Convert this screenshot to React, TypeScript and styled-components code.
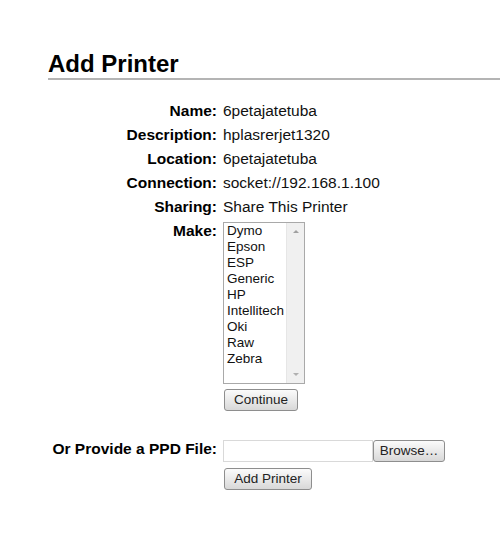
import React from "react";
import styled, { createGlobalStyle } from "styled-components";

const GlobalStyle = createGlobalStyle`
    body {
        margin: 0;
        background: #fff;
        font-family: "Liberation Sans", Arial, sans-serif;
        color: #000;
    }
`;

const Page = styled.div`
    padding: 50px 0 40px 48px;
`;

const Title = styled.h2`
    margin: 0 0 19px 0;
    font-size: 24px;
    line-height: 28px;
    font-weight: bold;
    color: #000;
    border-bottom: 2px solid #b4b4b4;
`;

const Form = styled.div`
    display: grid;
    grid-template-columns: 170px 1fr;
    column-gap: 5px;
    align-items: start;
`;

const Label = styled.div<{ lh?: number }>`
    text-align: right;
    padding-right: 1px;
    font-size: 15.5px;
    font-weight: bold;
    line-height: ${p => p.lh ?? 24}px;
    white-space: nowrap;
`;

const Value = styled.div`
    font-size: 15.5px;
    line-height: 24px;
    color: #111;
`;

const Cell = styled.div<{ top?: number }>`
    display: flex;
    flex-direction: column;
    align-items: flex-start;
    padding-top: ${p => p.top ?? 0}px;
`;

const ListBox = styled.div`
    display: flex;
    width: 80px;
    height: 160px;
    border: 1px solid #a9a9a9;
    background: #fff;
`;

const Options = styled.div`
    flex: 1;
    display: flex;
    flex-direction: column;
`;

const Option = styled.div`
    font-size: 13.5px;
    line-height: 16px;
    padding-left: 3px;
    color: #111;
`;

const ScrollBar = styled.div`
    width: 17px;
    display: flex;
    flex-direction: column;
    justify-content: space-between;
    align-items: center;
    background: #f0f0f0;
    border-left: 1px solid #e6e6e6;
`;

const Arrow = styled.div<{ down?: boolean }>`
    width: 17px;
    height: 17px;
    display: flex;
    align-items: center;
    justify-content: center;

    &::before {
        content: "";
        width: 0;
        height: 0;
        border-left: 3.5px solid transparent;
        border-right: 3.5px solid transparent;
        ${p => p.down
            ? "border-top: 3px solid #b0b0b0;"
            : "border-bottom: 3px solid #a0a0a0;"}
    }
`;

const Button = styled.button<{ w: number; mt?: number; ml?: number }>`
    width: ${p => p.w}px;
    height: 22px;
    margin: ${p => p.mt ?? 0}px 0 0 ${p => p.ml ?? 1}px;
    padding: 0;
    border: 1px solid #8e8e8e;
    border-radius: 3px;
    background: linear-gradient(#fbfbfb, #e8e8e8 55%, #d8d8d8);
    font-family: "Liberation Sans", Arial, sans-serif;
    font-size: 13.5px;
    line-height: 20px;
    color: #222;
`;

const FileRow = styled.div`
    display: flex;
    align-items: flex-start;
`;

const FileInput = styled.div`
    width: 148px;
    height: 20px;
    border: 1px solid #d9d9d9;
    background: #fff;
`;

const Spacer = styled.div`
    grid-column: 1 / span 2;
    height: 29px;
`;

const makes = ["Dymo", "Epson", "ESP", "Generic", "HP", "Intellitech", "Oki", "Raw", "Zebra"];

const info: [string, string][] = [
    ["Name:", "6petajatetuba"],
    ["Description:", "hplasrerjet1320"],
    ["Location:", "6petajatetuba"],
    ["Connection:", "socket://192.168.1.100"],
    ["Sharing:", "Share This Printer"],
];

const App: React.FC = () => {
    return (
        <>
            <GlobalStyle />
            <Page>
                <Title>Add Printer</Title>
                <Form>
                    {info.map(([k, v]) => (
                        <React.Fragment key={k}>
                            <Label>{k}</Label>
                            <Value>{v}</Value>
                        </React.Fragment>
                    ))}

                    <Label>Make:</Label>
                    <Cell top={3}>
                        <ListBox>
                            <Options>
                                {makes.map(m => <Option key={m}>{m}</Option>)}
                            </Options>
                            <ScrollBar>
                                <Arrow />
                                <Arrow down />
                            </ScrollBar>
                        </ListBox>
                        <Button w={74} mt={5}>Continue</Button>
                    </Cell>

                    <Spacer />

                    <Label lh={17}>Or Provide a PPD File:</Label>
                    <Cell>
                        <FileRow>
                            <FileInput />
                            <Button w={72} ml={0}>Browse…</Button>
                        </FileRow>
                        <Button w={88} mt={6}>Add Printer</Button>
                    </Cell>
                </Form>
            </Page>
        </>
    );
};

export default App;
